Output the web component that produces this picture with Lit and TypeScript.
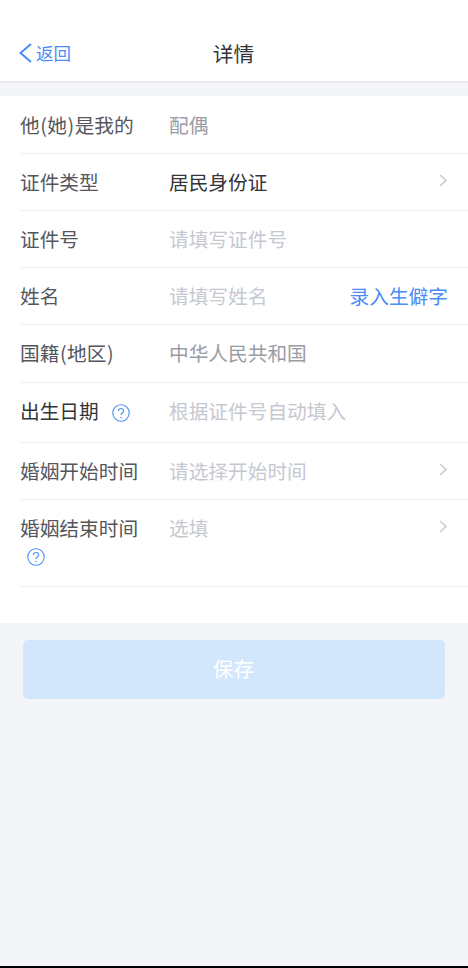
import { LitElement, html, css } from "lit";
import { customElement } from "lit/decorators.js";

const help = html`<svg class="help" viewBox="0 0 18 18" fill="none"><circle cx="9" cy="9" r="8.2" stroke="#4a90f5" stroke-width="1.1"/><path d="M6.4 7c0-1.5 1.2-2.5 2.6-2.5s2.6 1 2.6 2.4c0 1-.6 1.6-1.4 2.1-.7.5-1.2 1-1.2 1.9" stroke="#4a90f5" stroke-width="1.1"/><circle cx="9" cy="13.4" r=".75" fill="#4a90f5"/></svg>`;
const chev = html`<svg class="chev" viewBox="0 0 9 13" fill="none"><path d="M1 1l6 5.5L1 12" stroke="#c9cbd0" stroke-width="1.6"/></svg>`;

type Row = { label: string; value: string; kind: string; h: number; help?: "inline" | "below"; chev?: boolean; link?: string; bold?: boolean };
const rows: Row[] = [
  { label: "他(她)是我的", value: "配偶", kind: "muted", h: 57 },
  { label: "证件类型", value: "居民身份证", kind: "dark", h: 57, chev: true },
  { label: "证件号", value: "请填写证件号", kind: "ph", h: 57 },
  { label: "姓名", value: "请填写姓名", kind: "ph", h: 57, link: "录入生僻字" },
  { label: "国籍(地区)", value: "中华人民共和国", kind: "muted", h: 58 },
  { label: "出生日期", value: "根据证件号自动填入", kind: "ph", h: 60, help: "inline", bold: true },
  { label: "婚姻开始时间", value: "请选择开始时间", kind: "ph", h: 57, chev: true },
  { label: "婚姻结束时间", value: "选填", kind: "ph", h: 87, chev: true, help: "below" },
];

const labelText = (t: string) =>
  t.split(/([()])/).map((s) => (s === "(" || s === ")" ? html`<span class="p">${s}</span>` : s));

@customElement("app-root")
export class AppRoot extends LitElement {
  static styles = css`
    :host { display: flex; flex-direction: column; height: 968px; background: #f4f5f9; color: #33353b;
      font-family: "Noto Sans CJK SC", "Noto Sans", sans-serif; font-size: 19.7px; overflow: hidden; }
    .nav { height: 81px; flex: none; background: #fff; border-bottom: 2px solid #e9eaee; position: relative; }
    .back { position: absolute; left: 19px; top: 43px; display: flex; align-items: center; gap: 4px; color: #4a8cf6; font-size: 17.5px; line-height: 20px; }
    .back svg { width: 13px; height: 20px; }
    .title { text-align: center; padding-top: 39px; padding-right: 1px; font-size: 20.7px; line-height: 28px; color: #33353b; }
    .form { margin-top: 13px; background: #fff; padding: 1px 0 36px 20px; flex: none; }
    .row { display: flex; align-items: flex-start; border-bottom: 1px solid #eeeff2; box-sizing: border-box; padding-right: 20px; }
    .label { width: 149px; flex: none; line-height: 28px; color: #54565c; padding-top: 14px; }
    .label.bold { color: #33353b; }
    .p { margin: 0 0.5px; }
    .value { flex: 1; line-height: 28px; padding-top: 14px; }
    .muted { color: #9a9ca3; }
    .dark { color: #33353b; }
    .ph { color: #c6c8d0; }
    .link { color: #4a8cf6; line-height: 28px; padding-top: 14px; }
    .chev { width: 9px; height: 13px; margin: 20px 0 0; }
    .help { width: 18px; height: 18px; display: block; }
    .inl { display: inline-block; margin-left: 13px; vertical-align: -3px; }
    .blw { display: block; margin: 6px 0 0 7px; }
    .btnwrap { padding: 17px 23px 0; }
    .btn { height: 59px; background: #d3e7fc; border-radius: 5px; color: #fff; display: flex; align-items: center; justify-content: center; font-size: 20.7px; padding: 0 1px 3px 0; box-sizing: border-box; }
    .spacer { flex: 1; }
    .bar { height: 2px; background: #000; flex: none; }
  `;

  render() {
    return html`
      <div class="nav">
        <div class="back"><svg viewBox="0 0 13 20" fill="none"><path d="M12 1 1.5 10 12 19" stroke="#4a8cf6" stroke-width="2"/></svg>返回</div>
        <div class="title">详情</div>
      </div>
      <div class="form">
        ${rows.map((r) => html`
          <div class="row" style="height:${r.h}px">
            <div class="label ${r.bold ? "bold" : ""}">${labelText(r.label)}${r.help === "inline" ? html`<span class="inl">${help}</span>` : ""}${r.help === "below" ? html`<span class="blw">${help}</span>` : ""}</div>
            <div class="value ${r.kind}">${r.value}</div>
            ${r.link ? html`<div class="link">${r.link}</div>` : ""}
            ${r.chev ? chev : ""}
          </div>`)}
      </div>
      <div class="btnwrap"><div class="btn">保存</div></div>
      <div class="spacer"></div>
      <div class="bar"></div>
    `;
  }
}
